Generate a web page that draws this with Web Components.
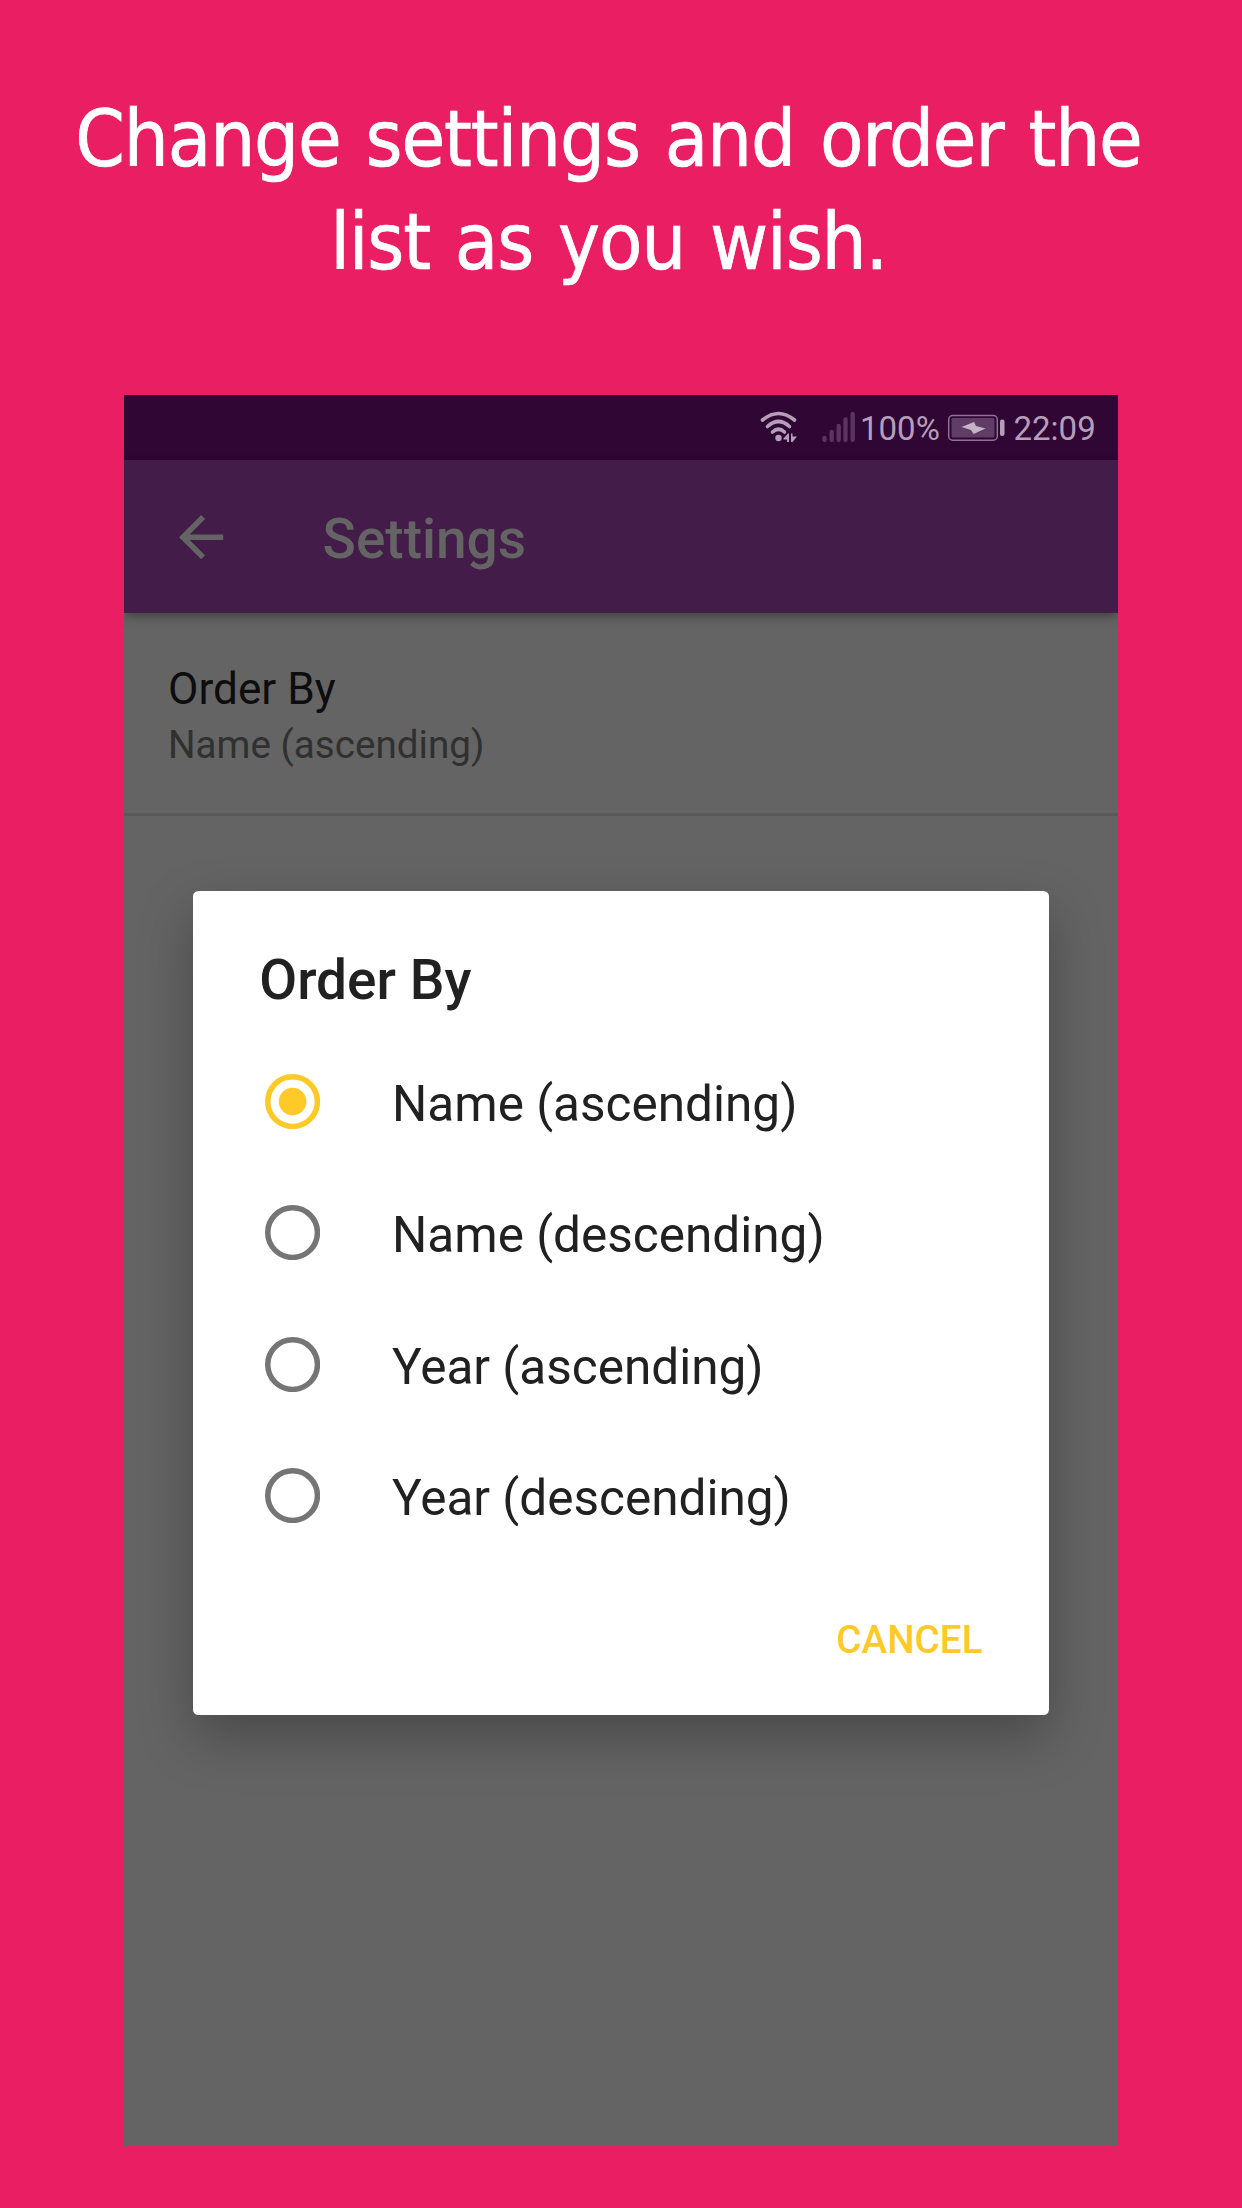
<!DOCTYPE html>
<html lang="en">
<head>
<meta charset="utf-8">
<title>Settings</title>
<style>
html,body{margin:0;padding:0;background:#ea1e63}
body{width:1242px;height:2208px;overflow:hidden;font-family:Roboto,"Liberation Sans",sans-serif}
</style>
</head>
<body>
<promo-page>
  <promo-caption slot="caption"><span>Change settings and order the</span><span slot="second">list as you wish.</span></promo-caption>
  <phone-screen>
    <status-bar slot="bars" battery="100%" time="22:09"></status-bar>
    <app-toolbar slot="bars">Settings</app-toolbar>
    <pref-item>Order By<span slot="summary">Name (ascending)</span></pref-item>
    <choice-dialog slot="dialog">
      <span slot="title">Order By</span>
      <radio-row checked>Name (ascending)</radio-row>
      <radio-row>Name (descending)</radio-row>
      <radio-row>Year (ascending)</radio-row>
      <radio-row>Year (descending)</radio-row>
      <span slot="action">CANCEL</span>
    </choice-dialog>
  </phone-screen>
</promo-page>
<script>
function define(name, html) {
  customElements.define(name, class extends HTMLElement {
    constructor() {
      super();
      this.attachShadow({mode: 'open'}).innerHTML = typeof html === 'function' ? html(this) : html;
    }
  });
}

define('promo-page', `
<style>
:host{display:flex;flex-direction:column;align-items:center;width:1242px;height:2208px;background:#ea1e63}
header{height:395px;width:100%;flex:none}
</style>
<header><slot name="caption"></slot></header>
<slot></slot>`);

define('promo-caption', `
<style>
:host{display:flex;flex-direction:column;align-items:center;padding:88px 25px 0 0;color:#fff;
 font-family:"DejaVu Sans Condensed","DejaVu Sans",sans-serif;font-stretch:condensed;font-size:79px;line-height:103px;white-space:nowrap;
 letter-spacing:-1.15px;word-spacing:3.500px;-webkit-text-stroke:.7px #fff}
</style>
<div><slot></slot></div>
<div><slot name="second"></slot></div>`);

define('phone-screen', `
<style>
:host{display:flex;flex-direction:column;position:relative;width:994px;height:1751px;background:#646464;overflow:hidden}
.over{position:absolute;left:69px;top:496px}
</style>
<slot name="bars"></slot>
<slot></slot>
<div class="over"><slot name="dialog"></slot></div>`);

define('status-bar', el => `
<style>
:host{display:flex;align-items:center;height:65px;background:#300635;color:#b59fb8;font-size:33px;line-height:65px;flex:none}
svg{flex:none;display:block}
.icons{margin-left:636px}
.pct{width:86px;padding-top:2px}
.bat{margin-left:1px}
.time{margin-left:8.500px;padding-top:2px}
</style>
<svg class="icons" width="100" height="65" viewBox="760 395 100 65">
 <g fill="none" stroke="#b59fb8" stroke-width="3.6" stroke-linecap="round">
  <path d="M762.500 420Q778.500 407 794.500 420"/>
  <path d="M767.500 426.500Q778.500 416.500 789.500 426.500"/>
  <path d="M772.500 432Q778.500 426.500 784.500 432"/>
 </g>
 <circle cx="778.500" cy="438" r="3.200" fill="#b59fb8"/>
 <path d="M783.500 438.500L788 433.500H789V442H787V439.500H783.500ZM791 433.500H792.500V436.500H797L792.500 442H791Z" fill="#b59fb8"/>
 <g stroke="#5a3560" stroke-width="4.300" stroke-linecap="round">
  <path d="M824.500 438V440M831.700 432V440M838.700 426V440M845.500 419.500V440M852.700 414V440"/>
 </g>
</svg>
<span class="pct">${el.getAttribute('battery')}</span>
<svg class="bat" width="58" height="65" viewBox="947 395 58 65">
 <rect x="948.700" y="415.600" width="48.600" height="24.600" rx="4" fill="none" stroke="#8f7394" stroke-width="1.500"/>
 <rect x="951.500" y="418" width="43" height="19.500" rx="1.500" fill="#5f3d66"/>
 <path d="M961.500 427L974 422L976 426L985.500 428.500L973.500 434L971 430Z" fill="#c4b3c6"/>
 <rect x="1000" y="419.500" width="4.500" height="16.500" rx="2" fill="#b59fb8"/>
</svg>
<span class="time">${el.getAttribute('time')}</span>`);

define('app-toolbar', `
<style>
:host{display:flex;align-items:center;height:153px;box-sizing:border-box;flex:none;background:#441c49;color:#646464;padding-left:43.800px;box-shadow:0 3px 10px rgba(0,0,0,.36);position:relative}
svg{width:66.300px;height:66.300px;display:block;padding-top:1px}
h1{margin:0 0 0 88.500px;padding-top:5px;font-size:55px;font-weight:500;line-height:66px}
</style>
<svg viewBox="0 0 24 24" fill="#646464"><path d="M20 11H7.830l5.590-5.590L12 4l-8 8 8 8 1.410-1.410L7.830 13H20v-2z"/></svg>
<h1><slot></slot></h1>`);

define('pref-item', `
<style>
:host{display:block;padding:50px 44px 45px;border-bottom:3px solid #5a5a5a;color:#0d0d0d;font-size:44.200px;line-height:52px}
.sum{padding-top:6.500px;font-size:38.650px;line-height:46px;color:#303030}
</style>
<div><slot></slot></div>
<div class="sum"><slot name="summary"></slot></div>`);

define('choice-dialog', `
<style>
:host{display:flex;flex-direction:column;box-sizing:border-box;width:856px;height:823.500px;background:#fff;border-radius:5.500px;padding-top:57px;color:#212121;box-shadow:0 22px 54px rgba(0,0,0,.27)}
.title{padding-left:66.300px;font-size:55px;line-height:64px;font-weight:500}
.list{padding-top:23.800px}
.act{padding:56px 66.500px 0;text-align:right;font-size:38.650px;font-weight:500;line-height:46px;color:#ffc928}
</style>
<div class="title"><slot name="title"></slot></div>
<div class="list"><slot></slot></div>
<div class="act"><slot name="action"></slot></div>`);

define('radio-row', el => {
  const on = el.hasAttribute('checked');
  return `
<style>
:host{display:flex;align-items:center;height:131.400px;padding-left:71.800px;font-size:49.500px;line-height:60px}
svg{width:55.200px;height:55.200px;display:block}
span{margin-left:72px;padding-top:5px}
</style>
<svg viewBox="0 0 20 20"><circle cx="10" cy="10" r="9" fill="none" stroke="${on ? '#ffc928' : '#757575'}" stroke-width="2"/>${on ? '<circle cx="10" cy="10" r="5" fill="#ffc928"/>' : ''}</svg>
<span><slot></slot></span>`;
});
</script>
</body>
</html>
